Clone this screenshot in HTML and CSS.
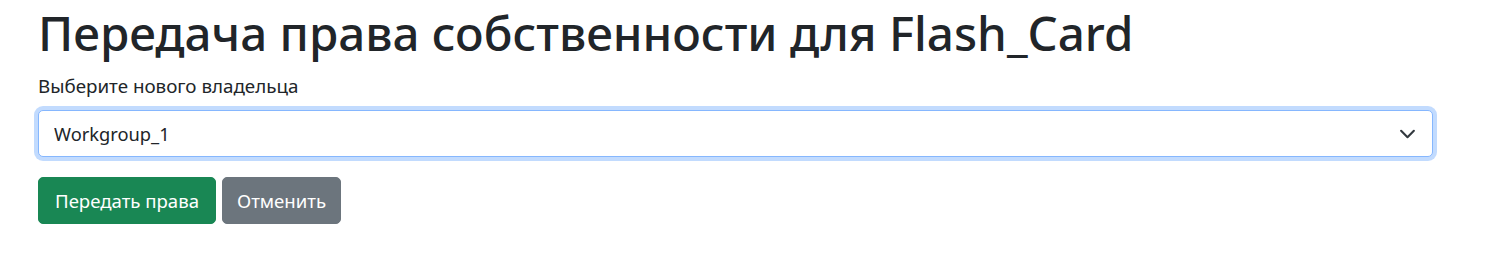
FILE: index.html
```html
<!DOCTYPE html>
<html lang="ru">
<head>
<meta charset="utf-8">
<link rel="stylesheet" href="styles.css">
</head>
<body>
<main class="page">
  <h1 class="title">Передача права собственности для Flash_Card</h1>
  <form class="form">
    <label class="label" for="owner">Выберите нового владельца</label>
    <div class="select-wrap">
      <select id="owner" class="select">
        <option>Workgroup_1</option>
      </select>
      <svg class="chevron" viewBox="0 0 16 16" width="17" height="17"><path d="M2 5l6 6 6-6" fill="none" stroke="#343a40" stroke-width="2" stroke-linecap="round" stroke-linejoin="round"/></svg>
    </div>
    <div class="actions">
      <button type="button" class="btn btn-success">Передать права</button>
      <button type="button" class="btn btn-secondary">Отменить</button>
    </div>
  </form>
</main>
</body>
</html>
```
FILE: styles.css
```css
* { box-sizing: border-box; }
html, body { margin: 0; padding: 0; background: #fff; }
body {
  font-family: "Noto Sans", "Open Sans", sans-serif;
  color: #212529;
  font-size: 19px;
  line-height: 1.5;
}
.page {
  padding: 4px 55px 0 38px;
}
.title {
  margin: 0 0 10px 0;
  font-size: 47.5px;
  font-weight: 500;
  line-height: 57.6px;
}
.form { display: flex; flex-direction: column; }
.label {
  display: block;
  font-size: 18.8px;
  line-height: 28.8px;
  margin-bottom: 10px;
}
.select-wrap { position: relative; }
.select {
  display: block;
  width: 100%;
  height: 47px;
  padding: 0 48px 0 15px;
  font-family: inherit;
  font-size: 18.3px;
  color: #212529;
  background: #fff;
  border: 1px solid #86b7fe;
  border-radius: 5px;
  box-shadow: 0 0 0 4px rgba(13, 110, 253, .25);
  appearance: none;
  -webkit-appearance: none;
  outline: none;
}
.chevron {
  position: absolute;
  right: 17px;
  top: 50%;
  transform: translateY(-50%);
  pointer-events: none;
}
.actions {
  display: flex;
  gap: 6px;
  margin-top: 20px;
}
.btn {
  height: 47px;
  padding: 0 16px;
  font-family: inherit;
  font-size: 18.6px;
  color: #fff;
  border: 1px solid transparent;
  border-radius: 5px;
}
.btn-success { background: #198754; border-color: #198754; }
.btn-secondary { background: #6c757d; border-color: #6c757d; padding: 0 14px; }
```
